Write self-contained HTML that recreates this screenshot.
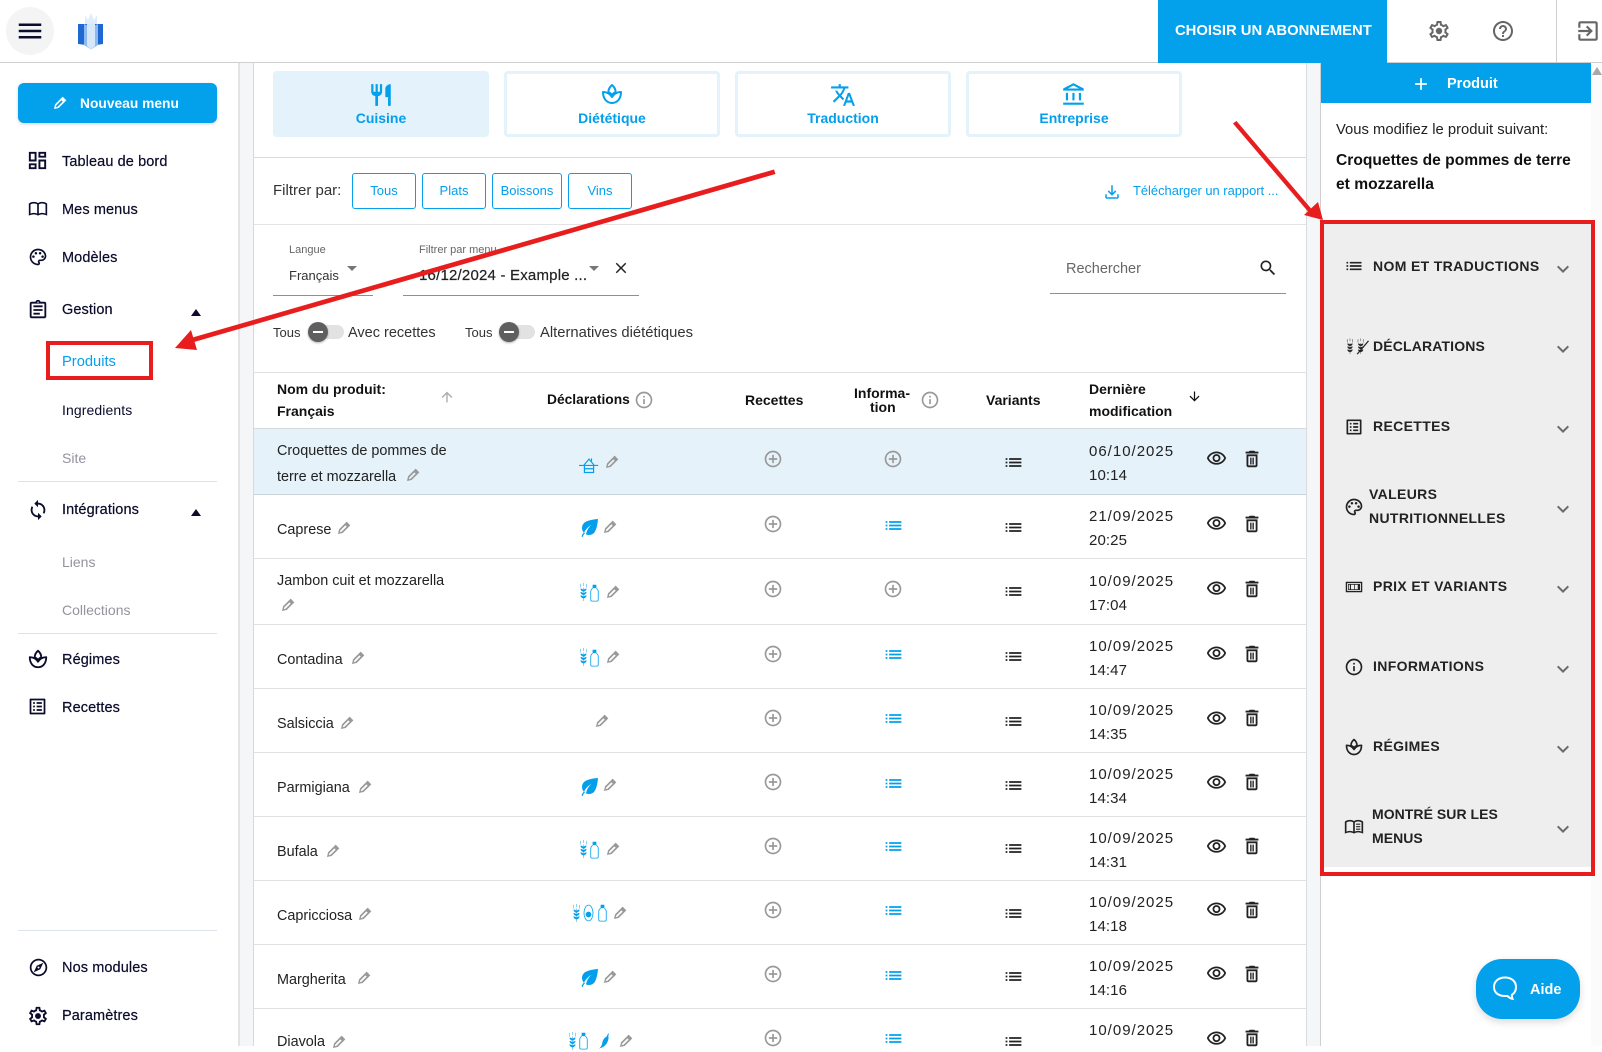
<!DOCTYPE html>
<html lang="fr"><head><meta charset="utf-8"><title>Produits</title>
<style>
html,body{margin:0;padding:0;width:1602px;height:1046px;overflow:hidden;background:#fff;font-family:"Liberation Sans",sans-serif;color:#222}
.a,.t,svg.i{position:absolute}
.t{white-space:nowrap;line-height:20px;font-size:15px;margin-top:1px}
.s{color:#0b0b2b;font-size:14.5px;left:62px;letter-spacing:.1px;-webkit-text-stroke:.2px #0b0b2b}
.m{color:#93939e;font-size:14px;left:62px}
.h{color:#111;font-weight:bold;font-size:14px}
.n{left:277px;color:#222;font-size:14.4px}
.d{left:1089px;color:#222;font-size:15px;letter-spacing:1px}
.e{left:1089px;color:#222;font-size:15px;letter-spacing:.1px}
.r{left:1373px;font-size:14px;font-weight:bold;color:#222;letter-spacing:.35px;margin-top:0}
.tab{position:absolute;top:71px;height:66px;width:216px;box-sizing:border-box;border:3px solid #e3f2fb;border-radius:4px}
.tl{color:#039fec;font-weight:bold;font-size:14px;text-align:center;width:216px}
.fb{position:absolute;top:173px;height:36px;box-sizing:border-box;border:1px solid #03a0ec;border-radius:3px;color:#039fec;font-size:13px;line-height:34px;text-align:center}
.l{position:absolute;height:1px}
.tr{position:absolute;width:36px;height:14px;border-radius:7px;background:#e2e2e2;top:325px}
.kn{position:absolute;width:20px;height:20px;border-radius:50%;background:#5f5f5f;top:322px;box-shadow:0 1px 2px rgba(0,0,0,.3)}
.kn:after{content:"";position:absolute;left:5px;top:9px;width:10px;height:2px;background:#fff}
.car{position:absolute;width:0;height:0;border-left:5px solid transparent;border-right:5px solid transparent}
</style></head><body>
<svg width="0" height="0" style="position:absolute"><defs>
<symbol id="menu" viewBox="0 0 24 24"><path d="M3 18h18v-2H3v2zm0-5h18v-2H3v2zm0-7v2h18V6H3z"/></symbol>
<symbol id="dash" viewBox="0 0 24 24"><path d="M19 5v2h-4V5h4M9 5v6H5V5h4m10 8v6h-4v-6h4M9 17v2H5v-2h4M21 3h-8v6h8V3zM11 3H3v10h8V3zm10 8h-8v10h8V11zm-10 4H3v6h8v-6z"/></symbol>
<symbol id="book" viewBox="0 0 24 24"><path d="M1 5.500C3 4 5 3.500 7 3.500c2 0 3.700.5 5 1.500 1.300-1 3-1.500 5-1.500 2 0 4 .5 6 2V20c-2-1-4-1.600-6-1.600-2 0-3.700.6-5 1.600-1.300-1-3-1.600-5-1.600-2 0-4 .6-6 1.600V5.500zm2 1v11c1.300-.5 2.700-.8 4-.8 1.500 0 2.900.3 4 .9V6.500c-1-.7-2.400-1.100-4-1.100-1.400 0-2.800.4-4 1.100zm10 0v11.100c1.100-.6 2.500-.9 4-.9 1.300 0 2.700.3 4 .8v-11c-1.200-.7-2.600-1.100-4-1.100-1.600 0-3 .4-4 1.100z"/></symbol>
<symbol id="bookl" viewBox="0 0 24 24"><path d="M1 5.500C3 4 5 3.500 7 3.500c2 0 3.700.5 5 1.500 1.300-1 3-1.500 5-1.500 2 0 4 .5 6 2V20c-2-1-4-1.600-6-1.600-2 0-3.700.6-5 1.600-1.300-1-3-1.600-5-1.600-2 0-4 .6-6 1.600V5.500zm2 1v11c1.300-.5 2.700-.8 4-.8 1.500 0 2.900.3 4 .9V6.500c-1-.7-2.400-1.100-4-1.100-1.400 0-2.800.4-4 1.100zm10 0v11.100c1.100-.6 2.500-.9 4-.9 1.300 0 2.700.3 4 .8v-11c-1.200-.7-2.600-1.100-4-1.100-1.600 0-3 .4-4 1.100zM14.500 8h5v1.300h-5zm0 3h5v1.300h-5zm0 3h5v1.300h-5z"/></symbol>
<symbol id="pal" viewBox="0 0 24 24"><path d="M12 22C6.490 22 2 17.510 2 12S6.490 2 12 2s10 4.040 10 9c0 3.310-2.690 6-6 6h-1.770c-.28 0-.5.22-.5.5 0 .12.05.23.13.33.41.47.64 1.060.64 1.670 0 1.380-1.120 2.500-2.500 2.500zm0-18c-4.410 0-8 3.590-8 8s3.590 8 8 8c.28 0 .5-.22.5-.5 0-.16-.08-.28-.14-.35-.41-.46-.63-1.050-.63-1.650 0-1.380 1.120-2.500 2.500-2.500H16c2.210 0 4-1.790 4-4 0-3.860-3.590-7-8-7z"/><circle cx="6.500" cy="11.500" r="1.500"/><circle cx="9.500" cy="7.500" r="1.500"/><circle cx="14.500" cy="7.500" r="1.500"/><circle cx="17.500" cy="11.500" r="1.500"/></symbol>
<symbol id="asg" viewBox="0 0 24 24"><path d="M7 15h7v2H7zm0-4h10v2H7zm0-4h10v2H7zm12-4h-4.180C14.400 1.840 13.300 1 12 1s-2.400.84-2.820 2H5c-1.100 0-2 .9-2 2v14c0 1.100.9 2 2 2h14c1.100 0 2-.9 2-2V5c0-1.100-.9-2-2-2zm-7-.25c.41 0 .75.34.75.75s-.34.75-.75.75-.75-.34-.75-.75.34-.75.75-.75zM19 19H5V5h14v14z"/></symbol>
<symbol id="sync" viewBox="0 0 24 24"><path d="M12 4V1L8 5l4 4V6c3.310 0 6 2.690 6 6 0 1.010-.25 1.970-.7 2.800l1.460 1.460C19.540 15.030 20 13.570 20 12c0-4.420-3.580-8-8-8zm0 14c-3.310 0-6-2.690-6-6 0-1.010.25-1.970.7-2.800L5.240 7.740C4.460 8.970 4 10.430 4 12c0 4.420 3.580 8 8 8v3l4-4-4-4v3z"/></symbol>
<symbol id="spa" viewBox="0 0 24 24"><path fill="none" stroke="currentColor" stroke-width="2" stroke-linejoin="round" d="M12 3c-2.500 2.200-3.600 4.400-3.600 7 .9.5 2.600 1.600 3.600 2.800 1-1.200 2.700-2.300 3.600-2.800 0-2.600-1.100-4.800-3.600-7zM12 21c-5 0-9-4-9-11 3.500 0 7 1.700 9 5 2-3.300 5.500-5 9-5 0 7-4 11-9 11z"/></symbol>
<symbol id="la" viewBox="0 0 24 24"><path d="M19 5v14H5V5h14m1.100-2H3.900c-.5 0-.9.4-.9.9v16.200c0 .4.4.9.9.9h16.200c.4 0 .9-.5.9-.9V3.900c0-.5-.5-.9-.9-.9zM11 7h6v2h-6V7zm0 4h6v2h-6v-2zm0 4h6v2h-6zM7 7h2v2H7zm0 4h2v2H7zm0 4h2v2H7z"/></symbol>
<symbol id="exp" viewBox="0 0 24 24"><path d="M12 2C6.480 2 2 6.480 2 12s4.480 10 10 10 10-4.480 10-10S17.520 2 12 2zm0 18c-4.410 0-8-3.590-8-8s3.590-8 8-8 8 3.590 8 8-3.590 8-8 8zm-5.500-2.500l7.510-3.490L17.500 6.500 9.990 9.990 6.500 17.500zm5.500-6.600c.61 0 1.100.49 1.100 1.100s-.49 1.100-1.100 1.100-1.100-.49-1.100-1.100.49-1.100 1.100-1.100z"/></symbol>
<symbol id="gear" viewBox="0 0 24 24"><path d="M19.430 12.980c.04-.32.07-.64.07-.98 0-.34-.03-.66-.07-.98l2.110-1.650c.19-.15.24-.42.12-.64l-2-3.460c-.09-.16-.26-.25-.44-.25-.06 0-.12.01-.17.03l-2.490 1c-.52-.4-1.080-.73-1.690-.98l-.38-2.650C14.460 2.180 14.250 2 14 2h-4c-.25 0-.46.18-.49.42l-.38 2.650c-.61.25-1.170.59-1.690.98l-2.490-1c-.06-.02-.12-.03-.18-.03-.17 0-.34.09-.43.25l-2 3.460c-.13.22-.07.49.12.64l2.110 1.650c-.04.32-.07.65-.07.98 0 .33.03.66.07.98l-2.110 1.650c-.19.15-.24.42-.12.64l2 3.460c.09.16.26.25.44.25.06 0 .12-.01.17-.03l2.490-1c.52.4 1.080.73 1.690.98l.38 2.650c.03.24.24.42.49.42h4c.25 0 .46-.18.49-.42l.38-2.650c.61-.25 1.170-.59 1.690-.98l2.490 1c.06.02.12.03.18.03.17 0 .34-.09.43-.25l2-3.460c.12-.22.07-.49-.12-.64l-2.110-1.650zm-1.980-1.710c.04.31.05.52.05.73 0 .21-.02.43-.05.73l-.14 1.130.89.7 1.080.84-.7 1.210-1.270-.51-1.040-.42-.9.68c-.43.32-.84.56-1.250.73l-1.060.43-.16 1.130-.2 1.350h-1.400l-.19-1.350-.16-1.130-1.060-.43c-.43-.18-.83-.41-1.230-.71l-.91-.7-1.060.43-1.270.51-.7-1.210 1.080-.84.89-.7-.14-1.130c-.03-.31-.05-.54-.05-.74s.02-.43.05-.73l.14-1.130-.89-.7-1.080-.84.7-1.210 1.270.51 1.040.42.9-.68c.43-.32.84-.56 1.250-.73l1.060-.43.16-1.130.2-1.350h1.390l.19 1.350.16 1.130 1.060.43c.43.18.83.41 1.230.71l.91.7 1.060-.43 1.270-.51.7 1.210-1.070.85-.89.7.14 1.130z"/><circle cx="12" cy="12" r="3.200"/></symbol>
<symbol id="help" viewBox="0 0 24 24"><path d="M11 18h2v-2h-2v2zm1-16C6.480 2 2 6.480 2 12s4.480 10 10 10 10-4.480 10-10S17.520 2 12 2zm0 18c-4.410 0-8-3.590-8-8s3.590-8 8-8 8 3.590 8 8-3.590 8-8 8zm0-14c-2.210 0-4 1.790-4 4h2c0-1.100.9-2 2-2s2 .9 2 2c0 2-3 1.750-3 5h2c0-2.250 3-2.500 3-5 0-2.210-1.790-4-4-4z"/></symbol>
<symbol id="exit" viewBox="0 0 24 24"><path d="M10.090 15.590L11.500 17l5-5-5-5-1.410 1.410L12.670 11H3v2h9.670l-2.580 2.590zM19 3H5c-1.110 0-2 .9-2 2v4h2V5h14v14H5v-4H3v4c0 1.100.89 2 2 2h14c1.100 0 2-.9 2-2V5c0-1.100-.9-2-2-2z"/></symbol>
<symbol id="ed" viewBox="0 0 24 24"><path fill-rule="evenodd" d="M3 21l1.500-7L16 2.500 21.500 8 10 19.500zM6.500 15.500l-.8 2.800 2.800-.8L16 10l-2-2z"/></symbol>
<symbol id="rest" viewBox="0 0 24 24"><path d="M11 9H9V2H7v7H5V2H3v7c0 2.120 1.660 3.840 3.750 3.970V22h2.500v-9.030C11.340 12.840 13 11.120 13 9V2h-2v7zm5-3v8h2.500v8H21V2c-2.760 0-5 2.240-5 4z"/></symbol>
<symbol id="tr" viewBox="0 0 24 24"><path d="M12.870 15.070l-2.540-2.510.03-.03c1.740-1.940 2.980-4.170 3.710-6.530H17V4h-7V2H8v2H1v1.990h11.170C11.500 7.920 10.440 9.750 9 11.350 8.070 10.320 7.300 9.190 6.690 8h-2c.73 1.630 1.730 3.170 2.980 4.560l-5.090 5.020L4 19l5-5 3.110 3.110.76-2.040zM18.500 10h-2L12 22h2l1.120-3h4.750L21 22h2l-4.500-12zm-2.620 7l1.620-4.330L19.120 17h-3.240z"/></symbol>
<symbol id="bank" viewBox="0 0 24 24"><path d="M6.500 10h-2v7h2v-7zm6 0h-2v7h2v-7zm8.500 9H2v2h19v-2zm-2.500-9h-2v7h2v-7zm-7-6.740L16.710 6H6.290l5.210-2.740m0-2.260L2 6v2h19V6l-9.500-5z"/></symbol>
<symbol id="srch" viewBox="0 0 24 24"><path d="M15.500 14h-.79l-.28-.27C15.410 12.590 16 11.110 16 9.500 16 5.910 13.090 3 9.500 3S3 5.910 3 9.500 5.910 16 9.500 16c1.610 0 3.090-.59 4.230-1.570l.27.28v.79l5 4.990L20.490 19l-4.990-5zm-6 0C7.010 14 5 11.990 5 9.500S7.010 5 9.500 5 14 7.010 14 9.500 11.990 14 9.500 14z"/></symbol>
<symbol id="x" viewBox="0 0 24 24"><path d="M19 6.410L17.590 5 12 10.590 6.410 5 5 6.410 10.590 12 5 17.590 6.410 19 12 13.410 17.590 19 19 17.590 13.410 12z"/></symbol>
<symbol id="inf" viewBox="0 0 24 24"><path d="M11 7h2v2h-2zm0 4h2v6h-2zm1-9C6.480 2 2 6.480 2 12s4.480 10 10 10 10-4.480 10-10S17.520 2 12 2zm0 18c-4.410 0-8-3.590-8-8s3.590-8 8-8 8 3.590 8 8-3.590 8-8 8z"/></symbol>
<symbol id="plus" viewBox="0 0 24 24"><path d="M13 7h-2v4H7v2h4v4h2v-4h4v-2h-4V7zm-1-5C6.480 2 2 6.480 2 12s4.480 10 10 10 10-4.480 10-10S17.520 2 12 2zm0 18c-4.410 0-8-3.590-8-8s3.590-8 8-8 8 3.590 8 8-3.590 8-8 8z"/></symbol>
<symbol id="list" viewBox="0 0 24 24"><path d="M3 13h2v-2H3v2zm0 4h2v-2H3v2zm0-8h2V7H3v2zm4 4h14v-2H7v2zm0 4h14v-2H7v2zM7 7v2h14V7H7z"/></symbol>
<symbol id="eye" viewBox="0 0 24 24"><path d="M12 6c3.790 0 7.170 2.130 8.820 5.500C19.170 14.870 15.790 17 12 17s-7.170-2.130-8.820-5.500C4.830 8.130 8.210 6 12 6m0-2C7 4 2.730 7.110 1 11.500 2.730 15.890 7 19 12 19s9.270-3.110 11-7.500C21.270 7.110 17 4 12 4zm0 5c1.380 0 2.500 1.120 2.500 2.500S13.380 14 12 14s-2.500-1.120-2.500-2.500S10.620 9 12 9m0-2c-2.480 0-4.500 2.020-4.500 4.500S9.520 16 12 16s4.500-2.020 4.500-4.500S14.480 7 12 7z"/></symbol>
<symbol id="del" viewBox="0 0 24 24"><path d="M16 9v10H8V9h8m-1.500-6h-5l-1 1H5v2h14V4h-3.500l-1-1zM18 7H6v12c0 1.100.9 2 2 2h8c1.100 0 2-.9 2-2V7zM10 10.500h1.500V18H10zm2.500 0H14V18h-1.500z"/></symbol>
<symbol id="up" viewBox="0 0 24 24"><path d="M4 12l1.410 1.410L11 7.830V20h2V7.830l5.580 5.590L20 12l-8-8-8 8z"/></symbol>
<symbol id="chev" viewBox="0 0 24 24"><path d="M16.590 8.590L12 13.170 7.410 8.590 6 10l6 6 6-6z"/></symbol>
<symbol id="add" viewBox="0 0 24 24"><path d="M19 13h-6v6h-2v-6H5v-2h6V5h2v6h6v2z"/></symbol>
<symbol id="dl" viewBox="0 0 24 24"><path d="M11 3h2v10.200l3.300-3.300 1.400 1.400L12 17l-5.700-5.700 1.400-1.400 3.300 3.300V3zM3 15h2v4h14v-4h2v4c0 1.100-.9 2-2 2H5c-1.100 0-2-.9-2-2v-4z"/></symbol>
<symbol id="leaf" viewBox="0 0 24 24"><path d="M6.050 8.050c-2.730 2.730-2.730 7.150-.02 9.880 1.470-3.400 4.090-6.240 7.360-7.930-2.770 2.340-4.710 5.610-5.390 9.320 2.600 1.230 5.800.78 7.950-1.370C19.430 14.470 20 4 20 4S9.530 4.570 6.050 8.050z"/><path d="M3.500 21.500C4.200 19.500 5 18.500 6 17.500l1 .8c-1 1-1.800 2.200-2.300 3.700z"/></symbol>
<symbol id="house" viewBox="0 0 24 24"><path fill="none" stroke="currentColor" stroke-width="1.400" d="M0 12.500h23M6 12l6-7 6 7M6.500 12.500V21h11v-8.500M6.500 16.500h11M15 4v3.500"/></symbol>
<symbol id="wheat" viewBox="0 0 12 24"><path fill="none" stroke="currentColor" stroke-width="1.100" d="M6 6v18M2 1v5M10 1v5M6 0v4"/><path d="M6 9C4 7.500 2.500 7.500 2 7.500 2 9.500 3.500 11 6 11.500 8.500 11 10 9.500 10 7.500 9.500 7.500 8 7.500 6 9zm0 4.500c-2-1.500-3.500-1.500-4-1.500 0 2 1.500 3.500 4 4 2.500-.5 4-2 4-4-.5 0-2 0-4 1.500zM6 18c-2-1.500-3.500-1.500-4-1.500 0 2 1.500 3.500 4 4 2.500-.5 4-2 4-4-.5 0-2 0-4 1.500z"/></symbol>
<symbol id="bot" viewBox="0 0 12 24"><path d="M3.500 1h5v4.500h-5z"/><path fill="none" stroke="currentColor" stroke-width="1.100" d="M3.500 5.500C2 7 1 8 1 10v11c0 1 .8 1.800 1.800 1.800h6.400c1 0 1.800-.8 1.800-1.800V10c0-2-1-3-2.500-4.500"/></symbol>
<symbol id="ov" viewBox="0 0 14 24"><ellipse cx="7" cy="12" rx="6" ry="10.500" fill="none" stroke="currentColor" stroke-width="1.100"/><circle cx="7" cy="14" r="3.800"/></symbol>
<symbol id="chili" viewBox="0 0 18 24"><path d="M15 4c1 3 1 6-1 10-2 4-6 7-11 8 3-2 4-5 4.500-8C8 11 10 8 12.500 6.500z"/><path d="M13 7l2-5 1.300.4-1.800 5z"/></symbol>
<symbol id="wx" viewBox="0 0 36 24"><g fill="none" stroke="currentColor" stroke-width="1.100"><path d="M6 7v16M2 1v5M10 1v5M6 0v4M22 7v16M18 1v5M26 1v5M22 0v4"/></g><path d="M6 9C4 7.500 2.500 7.500 2 7.500 2 9.500 3.500 11 6 11.500 8.500 11 10 9.500 10 7.500 9.500 7.500 8 7.500 6 9zm0 4.500c-2-1.500-3.500-1.500-4-1.500 0 2 1.500 3.500 4 4 2.500-.5 4-2 4-4-.5 0-2 0-4 1.500zM6 18c-2-1.500-3.500-1.500-4-1.500 0 2 1.500 3.500 4 4 2.500-.5 4-2 4-4-.5 0-2 0-4 1.500zM22 9c-2-1.500-3.500-1.500-4-1.500 0 2 1.500 3.500 4 4 2.500-.5 4-2 4-4-.5 0-2 0-4 1.500zm0 4.500c-2-1.500-3.500-1.500-4-1.500 0 2 1.500 3.500 4 4 2.500-.5 4-2 4-4-.5 0-2 0-4 1.500zM22 18c-2-1.500-3.500-1.500-4-1.500 0 2 1.500 3.500 4 4 2.500-.5 4-2 4-4-.5 0-2 0-4 1.500z"/><path d="M16 23L33 3l1.500 1.200L17.500 24z"/></symbol>
<symbol id="price" viewBox="0 0 24 24"><path d="M1 5h22v14H1zm1.800 1.800v10.400h18.400V6.800z"/><path d="M4 8h16v8H4zm1 1v6h1.500V9zm3 0v6h4V9zm5 0v6h4V9z"/></symbol>
</defs></svg>

<!-- backgrounds -->
<div class="a" style="left:238px;top:63px;width:16px;height:983px;background:#f5f6f8;border-left:2px solid #e2e3e6;box-sizing:border-box"></div>
<div class="a" style="left:1306px;top:63px;width:15px;height:983px;background:#f5f6f8;border-left:1px solid #dadbdf;border-right:1px solid #cfcfd2;box-sizing:border-box"></div>
<div class="a" style="left:253px;top:63px;width:1px;height:983px;background:#d8d9dc"></div>
<div class="a" style="left:1591px;top:63px;width:11px;height:983px;background:#fbfbfc"></div>
<div class="car" style="left:1592px;top:67px;border-bottom:8px solid #a8a8a8"></div>

<!-- top bar -->
<div class="l" style="left:0;top:62px;width:1602px;background:#cfcfcf"></div>
<div class="a" style="left:6px;top:7px;width:48px;height:48px;border-radius:50%;background:#f4f4f4"></div>
<svg class="i" style="left:15px;top:16px;width:30px;height:30px;fill:#0b0b2b"><use href="#menu"/></svg>
<svg class="a" style="left:76px;top:13px" width="30" height="37" viewBox="0 0 30 37"><path d="M9 2l3 5 3-7 3 7 3-5v10H9z" fill="#dfecfa"/><path d="M2 11h25v20l-7 1-5 3.500-5-3.500-8-1z" fill="#1f68d2"/><path d="M8 11l7 3 7-3v21l-7 4.500L8 32z" fill="#8cbaf0"/><path d="M11 11h8v22l-4 3.500-4-3.500z" fill="#d5e7f9"/></svg>
<div class="a" style="left:1158px;top:0;width:229px;height:63px;background:#03a0ec"></div>
<div class="t" style="left:1175px;top:20px;color:#fff;font-weight:bold;font-size:14.800px">CHOISIR UN ABONNEMENT</div>
<svg class="i" style="left:1427px;top:19px;width:24px;height:24px;fill:#666"><use href="#gear"/></svg>
<svg class="i" style="left:1491px;top:19px;width:24px;height:24px;fill:#666"><use href="#help"/></svg>
<div class="a" style="left:1556px;top:0;width:1px;height:62px;background:#cfcfcf"></div>
<svg class="i" style="left:1575px;top:18px;width:26px;height:26px;fill:#666"><use href="#exit"/></svg>

<!-- sidebar -->
<div class="a" style="left:18px;top:83px;width:199px;height:40px;background:#03a0ec;border-radius:6px;box-shadow:0 1px 3px rgba(0,0,0,.18)"></div>
<svg class="i" style="left:52px;top:95px;width:16px;height:16px;fill:#fff"><use href="#ed"/></svg>
<div class="t" style="left:80px;top:93px;color:#fff;font-weight:bold;font-size:13.800px">Nouveau menu</div>

<svg class="i" style="left:26px;top:149px;width:23px;height:23px;fill:#0b0b2b"><use href="#dash"/></svg>
<div class="t s" style="top:151px">Tableau de bord</div>
<svg class="i" style="left:28px;top:199px;width:20px;height:20px;fill:#0b0b2b"><use href="#book"/></svg>
<div class="t s" style="top:199px">Mes menus</div>
<svg class="i" style="left:28px;top:247px;width:20px;height:20px;fill:#0b0b2b"><use href="#pal"/></svg>
<div class="t s" style="top:247px">Modèles</div>
<svg class="i" style="left:27px;top:299px;width:22px;height:22px;fill:#0b0b2b"><use href="#asg"/></svg>
<div class="t s" style="top:299px">Gestion</div>
<div class="car" style="left:191px;top:309px;border-bottom:7px solid #0b0b2b"></div>
<div class="t" style="left:62px;top:351px;color:#03a0ec;font-size:14.700px">Produits</div>
<div class="t s" style="top:399px;font-size:14px;-webkit-text-stroke:0">Ingredients</div>
<div class="t m" style="top:447px">Site</div>
<div class="l" style="left:18px;top:481px;width:199px;background:#e0e2e8"></div>
<svg class="i" style="left:27px;top:499px;width:22px;height:22px;fill:#0b0b2b"><use href="#sync"/></svg>
<div class="t s" style="top:499px">Intégrations</div>
<div class="car" style="left:191px;top:509px;border-bottom:7px solid #0b0b2b"></div>
<div class="t m" style="top:551px">Liens</div>
<div class="t m" style="top:599px">Collections</div>
<div class="l" style="left:18px;top:633px;width:199px;background:#e0e2e8"></div>
<svg class="i" style="left:27px;top:648px;width:22px;height:22px;color:#0b0b2b"><use href="#spa"/></svg>
<div class="t s" style="top:649px">Régimes</div>
<svg class="i" style="left:27px;top:696px;width:21px;height:21px;fill:#0b0b2b"><use href="#la"/></svg>
<div class="t s" style="top:697px">Recettes</div>
<div class="l" style="left:18px;top:930px;width:199px;background:#dfe3ea"></div>
<svg class="i" style="left:28px;top:957px;width:21px;height:21px;fill:#0b0b2b"><use href="#exp"/></svg>
<div class="t s" style="top:957px">Nos modules</div>
<svg class="i" style="left:27px;top:1005px;width:22px;height:22px;fill:#0b0b2b"><use href="#gear"/></svg>
<div class="t s" style="top:1005px">Paramètres</div>

<!-- tabs -->
<div class="tab" style="left:273px;background:#e3f2fb"></div>
<div class="tab" style="left:504px"></div>
<div class="tab" style="left:735px"></div>
<div class="tab" style="left:966px"></div>
<svg class="i" style="left:368px;top:82px;width:26px;height:26px;fill:#03a0ec"><use href="#rest"/></svg>
<svg class="i" style="left:600px;top:82px;width:24px;height:24px;color:#03a0ec"><use href="#spa"/></svg>
<svg class="i" style="left:830px;top:82px;width:26px;height:26px;fill:#03a0ec"><use href="#tr"/></svg>
<svg class="i" style="left:1061px;top:82px;width:26px;height:26px;fill:#03a0ec"><use href="#bank"/></svg>
<div class="t tl" style="left:273px;top:107px">Cuisine</div>
<div class="t tl" style="left:504px;top:107px">Diététique</div>
<div class="t tl" style="left:735px;top:107px">Traduction</div>
<div class="t tl" style="left:966px;top:107px">Entreprise</div>
<div class="l" style="left:254px;top:157px;width:1052px;background:#dcdcdc"></div>

<!-- filters -->
<div class="t" style="left:273px;top:180px;font-size:15px;color:#333">Filtrer par:</div>
<div class="fb" style="left:352px;width:64px">Tous</div>
<div class="fb" style="left:422px;width:64px">Plats</div>
<div class="fb" style="left:492px;width:70px">Boissons</div>
<div class="fb" style="left:568px;width:64px">Vins</div>
<svg class="i" style="left:1103px;top:183px;width:18px;height:18px;fill:#03a0ec"><use href="#dl"/></svg>
<div class="t" style="left:1133px;top:180px;font-size:12.900px;color:#03a0ec">Télécharger un rapport ...</div>
<div class="l" style="left:254px;top:224px;width:1052px;background:#e4e4e4"></div>

<div class="t" style="left:289px;top:239px;font-size:11px;color:#666">Langue</div>
<div class="t" style="left:289px;top:265px;font-size:13px;color:#333">Français</div>
<div class="car" style="left:347px;top:266px;border-top:5px solid #777"></div>
<div class="l" style="left:273px;top:295px;width:100px;background:#8f8f8f"></div>
<div class="t" style="left:419px;top:239px;font-size:11px;color:#666">Filtrer par menu</div>
<div class="t" style="left:419px;top:265px;font-size:15px;color:#222;letter-spacing:.2px;-webkit-text-stroke:.2px #222">16/12/2024 - Example ...</div>
<div class="car" style="left:589px;top:266px;border-top:5px solid #777"></div>
<svg class="i" style="left:612px;top:259px;width:18px;height:18px;fill:#222"><use href="#x"/></svg>
<div class="l" style="left:403px;top:295px;width:236px;background:#8f8f8f"></div>
<div class="t" style="left:1066px;top:258px;font-size:14.500px;color:#666">Rechercher</div>
<svg class="i" style="left:1258px;top:258px;width:20px;height:20px;fill:#222"><use href="#srch"/></svg>
<div class="l" style="left:1050px;top:293px;width:236px;background:#8f8f8f"></div>

<div class="t" style="left:273px;top:322px;font-size:13px;color:#333">Tous</div>
<div class="tr" style="left:308px"></div><div class="kn" style="left:308px"></div>
<div class="t" style="left:348px;top:322px;font-size:14.500px;color:#333">Avec recettes</div>
<div class="t" style="left:465px;top:322px;font-size:13px;color:#333">Tous</div>
<div class="tr" style="left:499px"></div><div class="kn" style="left:499px"></div>
<div class="t" style="left:540px;top:322px;font-size:14.800px;color:#333">Alternatives diététiques</div>

<!-- table header -->
<div class="l" style="left:254px;top:372px;width:1052px;background:#e0e0e0"></div>
<div class="t h" style="left:277px;top:378px">Nom du produit:</div>
<div class="t h" style="left:277px;top:400px">Français</div>
<svg class="i" style="left:439px;top:389px;width:16px;height:16px;fill:#aaa"><use href="#up"/></svg>
<div class="t h" style="left:547px;top:389px;font-size:13.800px">Déclarations</div>
<svg class="i" style="left:634px;top:390px;width:20px;height:20px;fill:#999"><use href="#inf"/></svg>
<div class="t h" style="left:745px;top:389px">Recettes</div>
<div class="t h" style="left:854px;top:382px">Informa-</div>
<div class="t h" style="left:870px;top:396px">tion</div>
<svg class="i" style="left:920px;top:390px;width:20px;height:20px;fill:#999"><use href="#inf"/></svg>
<div class="t h" style="left:986px;top:389px">Variants</div>
<div class="t h" style="left:1089px;top:378px">Dernière</div>
<div class="t h" style="left:1089px;top:400px">modification</div>
<svg class="i" style="left:1187px;top:389px;width:15px;height:15px;fill:#111;transform:rotate(180deg)"><use href="#up"/></svg>

<!-- rows -->
<div class="a" style="left:254px;top:428px;width:1052px;height:67px;background:#e5f2fa;border-top:1px solid #d5d9dc;border-bottom:1px solid #c9d3d9;box-sizing:border-box"></div>
<div class="l" style="left:254px;top:558px;width:1052px;background:#e2e2e2"></div>
<div class="l" style="left:254px;top:624px;width:1052px;background:#e2e2e2"></div>
<div class="l" style="left:254px;top:688px;width:1052px;background:#e2e2e2"></div>
<div class="l" style="left:254px;top:752px;width:1052px;background:#e2e2e2"></div>
<div class="l" style="left:254px;top:816px;width:1052px;background:#e2e2e2"></div>
<div class="l" style="left:254px;top:880px;width:1052px;background:#e2e2e2"></div>
<div class="l" style="left:254px;top:944px;width:1052px;background:#e2e2e2"></div>
<div class="l" style="left:254px;top:1008px;width:1052px;background:#e2e2e2"></div>

<!-- names -->
<div class="t n" style="top:440px">Croquettes de pommes de</div>
<div class="t n" style="top:466px">terre et mozzarella</div>
<div class="t n" style="top:519px">Caprese</div>
<div class="t n" style="top:570px">Jambon cuit et mozzarella</div>
<div class="t n" style="top:649px">Contadina</div>
<div class="t n" style="top:713px">Salsiccia</div>
<div class="t n" style="top:777px">Parmigiana</div>
<div class="t n" style="top:841px">Bufala</div>
<div class="t n" style="top:905px">Capricciosa</div>
<div class="t n" style="top:969px">Margherita</div>
<div class="t n" style="top:1031px">Diavola</div>

<!-- name pencils -->
<svg class="i" style="left:405px;top:467px;width:16px;height:16px;fill:#999"><use href="#ed"/></svg>
<svg class="i" style="left:336px;top:520px;width:16px;height:16px;fill:#999"><use href="#ed"/></svg>
<svg class="i" style="left:280px;top:597px;width:16px;height:16px;fill:#999"><use href="#ed"/></svg>
<svg class="i" style="left:350px;top:650px;width:16px;height:16px;fill:#999"><use href="#ed"/></svg>
<svg class="i" style="left:339px;top:715px;width:16px;height:16px;fill:#999"><use href="#ed"/></svg>
<svg class="i" style="left:357px;top:779px;width:16px;height:16px;fill:#999"><use href="#ed"/></svg>
<svg class="i" style="left:325px;top:843px;width:16px;height:16px;fill:#999"><use href="#ed"/></svg>
<svg class="i" style="left:357px;top:906px;width:16px;height:16px;fill:#999"><use href="#ed"/></svg>
<svg class="i" style="left:356px;top:970px;width:16px;height:16px;fill:#999"><use href="#ed"/></svg>
<svg class="i" style="left:331px;top:1034px;width:16px;height:16px;fill:#999"><use href="#ed"/></svg>

<!-- declarations -->
<svg class="i" style="left:579px;top:455px;width:20px;height:20px;color:#03a0ec"><use href="#house"/></svg>
<svg class="i" style="left:604px;top:454px;width:16px;height:16px;fill:#999"><use href="#ed"/></svg>
<svg class="i" style="left:578px;top:515px;width:24px;height:24px;fill:#039fec"><use href="#leaf"/></svg>
<svg class="i" style="left:602px;top:519px;width:16px;height:16px;fill:#999"><use href="#ed"/></svg>
<svg class="i" style="left:579px;top:583px;width:9px;height:18px;fill:#03a0ec;color:#7cc6f3"><use href="#wheat"/></svg>
<svg class="i" style="left:590px;top:584px;width:9px;height:18px;fill:#03a0ec;color:#03a0ec"><use href="#bot"/></svg>
<svg class="i" style="left:605px;top:584px;width:16px;height:16px;fill:#999"><use href="#ed"/></svg>
<svg class="i" style="left:579px;top:648px;width:9px;height:18px;fill:#03a0ec;color:#7cc6f3"><use href="#wheat"/></svg>
<svg class="i" style="left:590px;top:649px;width:9px;height:18px;fill:#03a0ec;color:#03a0ec"><use href="#bot"/></svg>
<svg class="i" style="left:605px;top:649px;width:16px;height:16px;fill:#999"><use href="#ed"/></svg>
<svg class="i" style="left:594px;top:713px;width:16px;height:16px;fill:#999"><use href="#ed"/></svg>
<svg class="i" style="left:578px;top:774px;width:24px;height:24px;fill:#039fec"><use href="#leaf"/></svg>
<svg class="i" style="left:602px;top:777px;width:16px;height:16px;fill:#999"><use href="#ed"/></svg>
<svg class="i" style="left:579px;top:840px;width:9px;height:18px;fill:#03a0ec;color:#7cc6f3"><use href="#wheat"/></svg>
<svg class="i" style="left:590px;top:841px;width:9px;height:18px;fill:#03a0ec;color:#03a0ec"><use href="#bot"/></svg>
<svg class="i" style="left:605px;top:841px;width:16px;height:16px;fill:#999"><use href="#ed"/></svg>
<svg class="i" style="left:572px;top:904px;width:9px;height:18px;fill:#03a0ec;color:#7cc6f3"><use href="#wheat"/></svg>
<svg class="i" style="left:583px;top:904px;width:11px;height:18px;fill:#03a0ec;color:#03a0ec"><use href="#ov"/></svg>
<svg class="i" style="left:598px;top:904px;width:9px;height:18px;fill:#03a0ec;color:#03a0ec"><use href="#bot"/></svg>
<svg class="i" style="left:612px;top:905px;width:16px;height:16px;fill:#999"><use href="#ed"/></svg>
<svg class="i" style="left:578px;top:965px;width:24px;height:24px;fill:#039fec"><use href="#leaf"/></svg>
<svg class="i" style="left:602px;top:969px;width:16px;height:16px;fill:#999"><use href="#ed"/></svg>
<svg class="i" style="left:568px;top:1032px;width:9px;height:18px;fill:#03a0ec;color:#7cc6f3"><use href="#wheat"/></svg>
<svg class="i" style="left:579px;top:1032px;width:9px;height:18px;fill:#03a0ec;color:#03a0ec"><use href="#bot"/></svg>
<svg class="i" style="left:596px;top:1032px;width:15px;height:18px;fill:#03a0ec"><use href="#chili"/></svg>
<svg class="i" style="left:618px;top:1033px;width:16px;height:16px;fill:#999"><use href="#ed"/></svg>

<!-- recettes plus -->
<svg class="i" style="left:763px;top:449px;width:20px;height:20px;fill:#999"><use href="#plus"/></svg>
<svg class="i" style="left:763px;top:514px;width:20px;height:20px;fill:#999"><use href="#plus"/></svg>
<svg class="i" style="left:763px;top:579px;width:20px;height:20px;fill:#999"><use href="#plus"/></svg>
<svg class="i" style="left:763px;top:644px;width:20px;height:20px;fill:#999"><use href="#plus"/></svg>
<svg class="i" style="left:763px;top:708px;width:20px;height:20px;fill:#999"><use href="#plus"/></svg>
<svg class="i" style="left:763px;top:772px;width:20px;height:20px;fill:#999"><use href="#plus"/></svg>
<svg class="i" style="left:763px;top:836px;width:20px;height:20px;fill:#999"><use href="#plus"/></svg>
<svg class="i" style="left:763px;top:900px;width:20px;height:20px;fill:#999"><use href="#plus"/></svg>
<svg class="i" style="left:763px;top:964px;width:20px;height:20px;fill:#999"><use href="#plus"/></svg>
<svg class="i" style="left:763px;top:1028px;width:20px;height:20px;fill:#999"><use href="#plus"/></svg>

<!-- info -->
<svg class="i" style="left:883px;top:449px;width:20px;height:20px;fill:#999"><use href="#plus"/></svg>
<svg class="i" style="left:883px;top:515px;width:21px;height:21px;fill:#03a0ec"><use href="#list"/></svg>
<svg class="i" style="left:883px;top:579px;width:20px;height:20px;fill:#999"><use href="#plus"/></svg>
<svg class="i" style="left:883px;top:644px;width:21px;height:21px;fill:#03a0ec"><use href="#list"/></svg>
<svg class="i" style="left:883px;top:708px;width:21px;height:21px;fill:#03a0ec"><use href="#list"/></svg>
<svg class="i" style="left:883px;top:773px;width:21px;height:21px;fill:#03a0ec"><use href="#list"/></svg>
<svg class="i" style="left:883px;top:836px;width:21px;height:21px;fill:#03a0ec"><use href="#list"/></svg>
<svg class="i" style="left:883px;top:900px;width:21px;height:21px;fill:#03a0ec"><use href="#list"/></svg>
<svg class="i" style="left:883px;top:965px;width:21px;height:21px;fill:#03a0ec"><use href="#list"/></svg>
<svg class="i" style="left:883px;top:1028px;width:21px;height:21px;fill:#03a0ec"><use href="#list"/></svg>

<!-- variants -->
<svg class="i" style="left:1003px;top:452px;width:21px;height:21px;fill:#222"><use href="#list"/></svg>
<svg class="i" style="left:1003px;top:517px;width:21px;height:21px;fill:#222"><use href="#list"/></svg>
<svg class="i" style="left:1003px;top:581px;width:21px;height:21px;fill:#222"><use href="#list"/></svg>
<svg class="i" style="left:1003px;top:646px;width:21px;height:21px;fill:#222"><use href="#list"/></svg>
<svg class="i" style="left:1003px;top:711px;width:21px;height:21px;fill:#222"><use href="#list"/></svg>
<svg class="i" style="left:1003px;top:775px;width:21px;height:21px;fill:#222"><use href="#list"/></svg>
<svg class="i" style="left:1003px;top:838px;width:21px;height:21px;fill:#222"><use href="#list"/></svg>
<svg class="i" style="left:1003px;top:903px;width:21px;height:21px;fill:#222"><use href="#list"/></svg>
<svg class="i" style="left:1003px;top:966px;width:21px;height:21px;fill:#222"><use href="#list"/></svg>
<svg class="i" style="left:1003px;top:1031px;width:21px;height:21px;fill:#222"><use href="#list"/></svg>

<!-- dates -->
<div class="t d" style="top:441px">06/10/2025</div><div class="t e" style="top:465px">10:14</div>
<div class="t d" style="top:506px">21/09/2025</div><div class="t e" style="top:530px">20:25</div>
<div class="t d" style="top:571px">10/09/2025</div><div class="t e" style="top:595px">17:04</div>
<div class="t d" style="top:636px">10/09/2025</div><div class="t e" style="top:660px">14:47</div>
<div class="t d" style="top:700px">10/09/2025</div><div class="t e" style="top:724px">14:35</div>
<div class="t d" style="top:764px">10/09/2025</div><div class="t e" style="top:788px">14:34</div>
<div class="t d" style="top:828px">10/09/2025</div><div class="t e" style="top:852px">14:31</div>
<div class="t d" style="top:892px">10/09/2025</div><div class="t e" style="top:916px">14:18</div>
<div class="t d" style="top:956px">10/09/2025</div><div class="t e" style="top:980px">14:16</div>
<div class="t d" style="top:1020px">10/09/2025</div>

<!-- eye & trash -->
<svg class="i" style="left:1206px;top:448px;width:21px;height:21px;fill:#222"><use href="#eye"/></svg><svg class="i" style="left:1241px;top:448px;width:22px;height:22px;fill:#222"><use href="#del"/></svg>
<svg class="i" style="left:1206px;top:513px;width:21px;height:21px;fill:#222"><use href="#eye"/></svg><svg class="i" style="left:1241px;top:513px;width:22px;height:22px;fill:#222"><use href="#del"/></svg>
<svg class="i" style="left:1206px;top:578px;width:21px;height:21px;fill:#222"><use href="#eye"/></svg><svg class="i" style="left:1241px;top:578px;width:22px;height:22px;fill:#222"><use href="#del"/></svg>
<svg class="i" style="left:1206px;top:643px;width:21px;height:21px;fill:#222"><use href="#eye"/></svg><svg class="i" style="left:1241px;top:643px;width:22px;height:22px;fill:#222"><use href="#del"/></svg>
<svg class="i" style="left:1206px;top:708px;width:21px;height:21px;fill:#222"><use href="#eye"/></svg><svg class="i" style="left:1241px;top:707px;width:22px;height:22px;fill:#222"><use href="#del"/></svg>
<svg class="i" style="left:1206px;top:772px;width:21px;height:21px;fill:#222"><use href="#eye"/></svg><svg class="i" style="left:1241px;top:771px;width:22px;height:22px;fill:#222"><use href="#del"/></svg>
<svg class="i" style="left:1206px;top:836px;width:21px;height:21px;fill:#222"><use href="#eye"/></svg><svg class="i" style="left:1241px;top:835px;width:22px;height:22px;fill:#222"><use href="#del"/></svg>
<svg class="i" style="left:1206px;top:899px;width:21px;height:21px;fill:#222"><use href="#eye"/></svg><svg class="i" style="left:1241px;top:899px;width:22px;height:22px;fill:#222"><use href="#del"/></svg>
<svg class="i" style="left:1206px;top:963px;width:21px;height:21px;fill:#222"><use href="#eye"/></svg><svg class="i" style="left:1241px;top:963px;width:22px;height:22px;fill:#222"><use href="#del"/></svg>
<svg class="i" style="left:1206px;top:1028px;width:21px;height:21px;fill:#222"><use href="#eye"/></svg><svg class="i" style="left:1241px;top:1027px;width:22px;height:22px;fill:#222"><use href="#del"/></svg>

<!-- right panel -->
<div class="a" style="left:1321px;top:63px;width:270px;height:40px;background:#03a0ec"></div>
<svg class="i" style="left:1411px;top:74px;width:20px;height:20px;fill:#fff"><use href="#add"/></svg>
<div class="t" style="left:1447px;top:73px;color:#fff;font-weight:bold;font-size:14.500px">Produit</div>
<div class="t" style="left:1336px;top:119px;font-size:14.800px;color:#222">Vous modifiez le produit suivant:</div>
<div class="t" style="left:1336px;top:150px;font-weight:bold;font-size:15.600px;color:#111">Croquettes de pommes de terre</div>
<div class="t" style="left:1336px;top:174px;font-weight:bold;font-size:15.600px;color:#111">et mozzarella</div>

<div class="a" style="left:1324px;top:224px;width:267px;height:643px;background:#eeeeee"></div>
<svg class="i" style="left:1344px;top:256px;width:20px;height:20px;fill:#222"><use href="#list"/></svg>
<div class="t r" style="top:256px">NOM ET TRADUCTIONS</div>
<svg class="i" style="left:1346px;top:338px;width:24px;height:17px;fill:#222;color:#777"><use href="#wx"/></svg>
<div class="t r" style="top:336px;letter-spacing:.15px">DÉCLARATIONS</div>
<svg class="i" style="left:1344px;top:417px;width:20px;height:20px;fill:#222"><use href="#la"/></svg>
<div class="t r" style="top:416px">RECETTES</div>
<svg class="i" style="left:1344px;top:497px;width:20px;height:20px;fill:#222"><use href="#pal"/></svg>
<div class="t r" style="left:1369px;top:484px">VALEURS</div>
<div class="t r" style="left:1369px;top:508px">NUTRITIONNELLES</div>
<svg class="i" style="left:1345px;top:578px;width:18px;height:18px;fill:#222"><use href="#price"/></svg>
<div class="t r" style="top:576px">PRIX ET VARIANTS</div>
<svg class="i" style="left:1344px;top:657px;width:20px;height:20px;fill:#222"><use href="#inf"/></svg>
<div class="t r" style="top:656px">INFORMATIONS</div>
<svg class="i" style="left:1344px;top:737px;width:20px;height:20px;color:#222"><use href="#spa"/></svg>
<div class="t r" style="top:736px">RÉGIMES</div>
<svg class="i" style="left:1344px;top:817px;width:20px;height:20px;fill:#222"><use href="#bookl"/></svg>
<div class="t r" style="left:1372px;top:804px;letter-spacing:.05px">MONTRÉ SUR LES</div>
<div class="t r" style="left:1372px;top:828px;letter-spacing:.05px">MENUS</div>
<svg class="i" style="left:1551px;top:257px;width:24px;height:24px;fill:#6b6b6b"><use href="#chev"/></svg>
<svg class="i" style="left:1551px;top:337px;width:24px;height:24px;fill:#6b6b6b"><use href="#chev"/></svg>
<svg class="i" style="left:1551px;top:417px;width:24px;height:24px;fill:#6b6b6b"><use href="#chev"/></svg>
<svg class="i" style="left:1551px;top:497px;width:24px;height:24px;fill:#6b6b6b"><use href="#chev"/></svg>
<svg class="i" style="left:1551px;top:577px;width:24px;height:24px;fill:#6b6b6b"><use href="#chev"/></svg>
<svg class="i" style="left:1551px;top:657px;width:24px;height:24px;fill:#6b6b6b"><use href="#chev"/></svg>
<svg class="i" style="left:1551px;top:737px;width:24px;height:24px;fill:#6b6b6b"><use href="#chev"/></svg>
<svg class="i" style="left:1551px;top:817px;width:24px;height:24px;fill:#6b6b6b"><use href="#chev"/></svg>

<!-- aide -->
<div class="a" style="left:1476px;top:959px;width:104px;height:60px;border-radius:26px;background:#03a0ec;box-shadow:0 3px 8px rgba(0,0,0,.15)"></div>
<svg class="a" style="left:1491px;top:975px" width="28" height="28" viewBox="0 0 28 28"><path d="M14 2.500c-6.500 0-11 3.700-11 9.500s4.500 9 11 9h2.500c1 1 2.500 2.500 5 2.800-.5-1.200-.8-2.600-.6-4C24 18 25 15 25 12c0-5.800-4.500-9.500-11-9.500z" fill="none" stroke="#fff" stroke-width="2"/></svg>
<div class="t" style="left:1530px;top:979px;color:#fff;font-weight:bold;font-size:14.500px">Aide</div>

<!-- red annotations -->
<div class="a" style="left:46px;top:341px;width:107px;height:39px;box-sizing:border-box;border:4px solid #e81e1e"></div>
<div class="a" style="left:1320px;top:220px;width:275px;height:656px;box-sizing:border-box;border:4px solid #e81e1e"></div>
<svg class="a" style="left:0;top:0" width="1602" height="1046"><g fill="#e81e1e" stroke="none"><path d="M774 169.500l1.500 4.500L194 342l-1.500-4.500z"/><polygon points="175,348 191,330 197,350"/><path d="M1233 123.500l3.500-2.500 75 88-3.500 2.500z"/><polygon points="1323,220 1304,215 1318,202"/></g></svg>
</body></html>
